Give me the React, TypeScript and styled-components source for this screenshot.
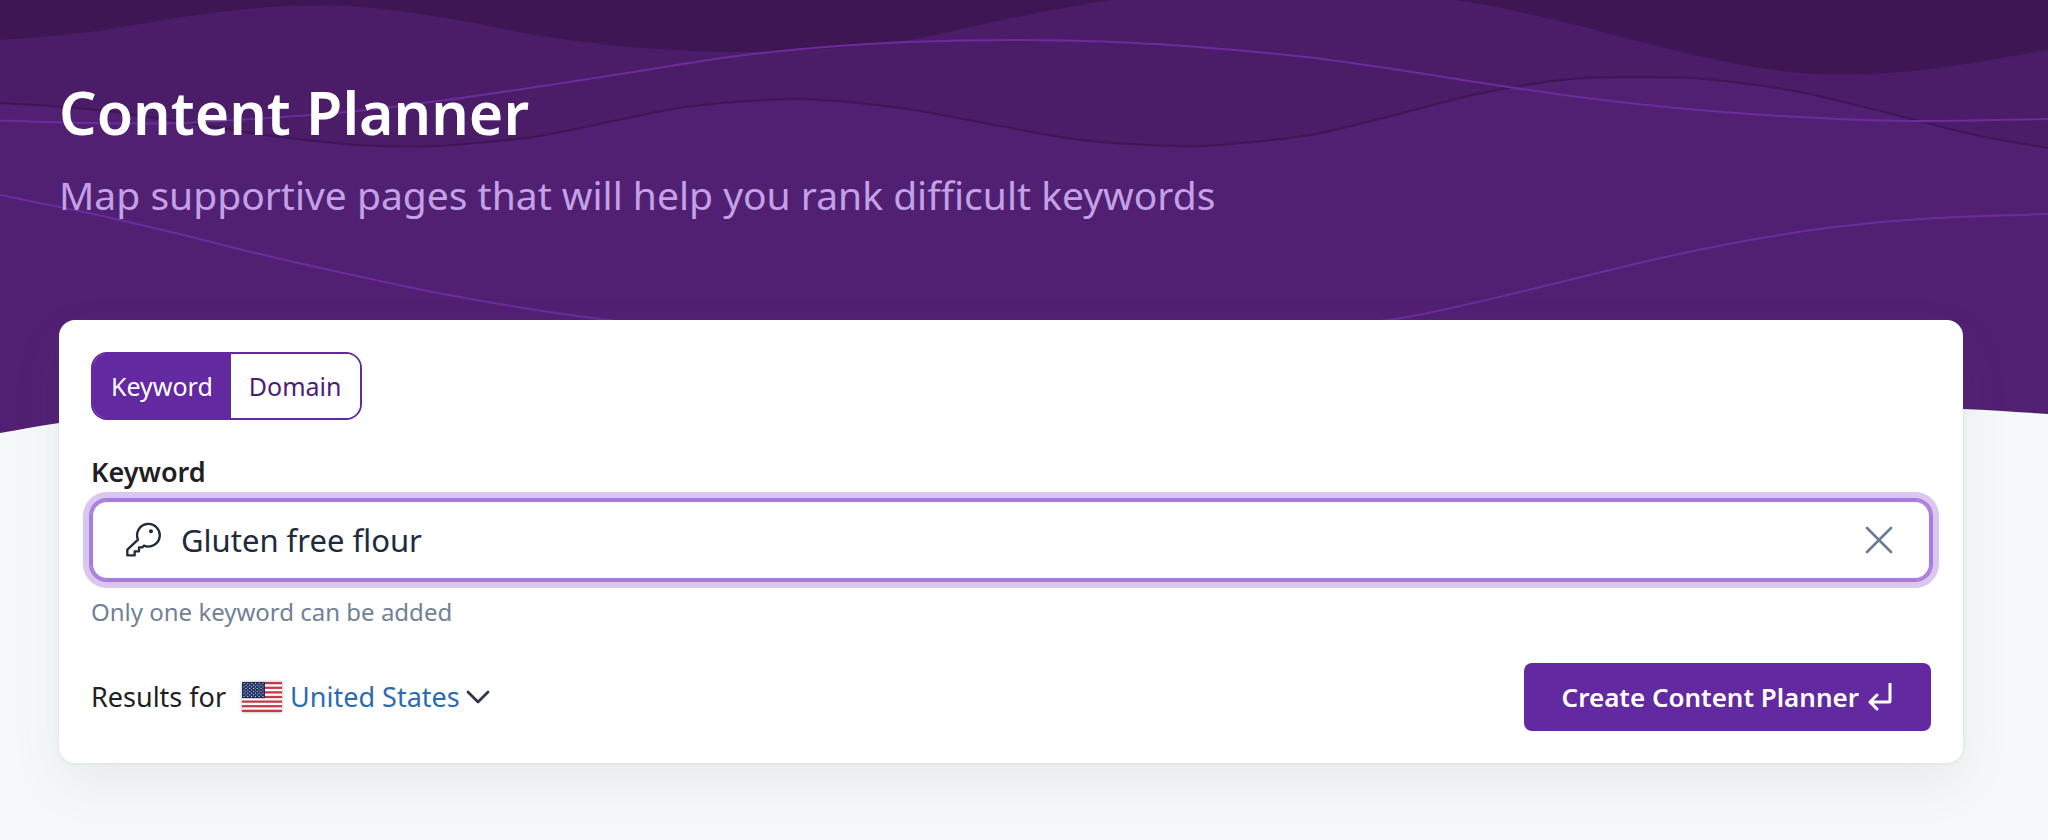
import React, { useState } from 'react';
import styled, { createGlobalStyle } from 'styled-components';

const GlobalStyle = createGlobalStyle`
  *, *::before, *::after { box-sizing: border-box; }
  body {
    margin: 0;
    background: #f5f9fa;
    color: #1f2023;
    font-family: "Noto Sans", sans-serif;
  }
  button, input, select { font: inherit; color: inherit; margin: 0; }
`;

const Page = styled.div`
  position: relative;
  min-height: 100vh;
  overflow: hidden;
`;

const Waves = styled.svg`
  position: absolute;
  top: 0;
  left: 0;
  width: 100%;
  height: 440px;
`;

const Content = styled.main`
  position: relative;
  padding: 76px 85px 76px 59px;
`;

const Title = styled.h1`
  margin: 0;
  font-size: 59px;
  font-weight: 600;
  line-height: 72px;
  color: #fff;
`;

const Subtitle = styled.p`
  margin: 20px 0 0;
  font-size: 39px;
  line-height: 54px;
  color: #c3a1e6;
`;

const Card = styled.form`
  display: flex;
  flex-direction: column;
  align-items: stretch;
  margin-top: 98px;
  padding: 32px;
  border-radius: 16px;
  background: #fff;
  box-shadow: 0 20px 50px rgba(75, 85, 85, 0.09), 0 0 4px rgba(75, 85, 85, 0.12);
`;

const Toggle = styled.div`
  display: flex;
  align-self: flex-start;
  height: 68px;
  overflow: hidden;
  border: 2px solid #6229a0;
  border-radius: 16px;
`;

const ToggleOption = styled.button<{ $active: boolean }>`
  padding: 0 18px;
  border: 0;
  font-size: 25px;
  background: ${(p) => (p.$active ? '#6229a0' : '#fff')};
  box-shadow: ${(p) => (p.$active ? '0 0 0 2px #6229a0' : 'none')};
  color: ${(p) => (p.$active ? '#fff' : '#4a1d7a')};
`;

const Label = styled.label`
  margin-top: 34px;
  font-size: 27px;
  font-weight: 600;
  line-height: 36px;
`;

const Field = styled.div`
  display: flex;
  align-items: center;
  gap: 20px;
  height: 80px;
  margin-top: 10px;
  padding: 0 32px;
  border: 2px solid #a87cdc;
  border-radius: 16px;
  box-shadow: 0 0 0 2px #a87cdc, 0 0 0 8px #dac6ee;
  color: #212a3b;
`;

const TextInput = styled.input`
  flex: 1;
  min-width: 0;
  padding: 0;
  border: 0;
  outline: 0;
  background: transparent;
  font-size: 31px;
  line-height: 44px;
`;

const ClearButton = styled.button`
  display: flex;
  padding: 4px;
  border: 0;
  background: transparent;
  color: #6b7d94;
`;

const Hint = styled.p`
  margin: 16px 0 0;
  font-size: 24px;
  line-height: 32px;
  color: #718196;
`;

const Footer = styled.div`
  display: flex;
  align-items: center;
  justify-content: space-between;
  margin-top: 35px;
`;

const Location = styled.div`
  display: flex;
  align-items: center;
  gap: 8px;
  font-size: 27px;
  line-height: 36px;
`;

const LocationLabel = styled.label`
  margin-right: 8px;
`;

const FlagFrame = styled.svg`
  display: block;
  box-shadow: 0 0 3px rgba(0, 0, 0, 0.35);
`;

const SelectWrap = styled.div`
  display: flex;
  align-items: center;
  gap: 5px;
  color: #2d3748;
`;

const CountrySelect = styled.select`
  appearance: none;
  padding: 0;
  border: 0;
  outline: 0;
  background: transparent;
  color: #2b6cb0;
`;

const SubmitButton = styled.button`
  display: flex;
  align-items: center;
  gap: 6px;
  height: 68px;
  padding: 0 38px;
  border: 0;
  border-radius: 8px;
  background: #6229a0;
  color: #fff;
  font-size: 26px;
  font-weight: 600;
`;

type Point = [number, number];

// Slope of the curve at a point, taken from its two neighbours.
function slopeAt(points: Point[], i: number): number {
  const a = points[Math.max(i - 1, 0)];
  const b = points[Math.min(i + 1, points.length - 1)];
  return (b[1] - a[1]) / (b[0] - a[0]);
}

// A smooth line through the points, as cubic segments.
function curve(points: Point[]): string {
  return points
    .map(([x, y], i) => {
      if (i === 0) return `M${x} ${y}`;
      const [px, py] = points[i - 1];
      const third = (x - px) / 3;
      const y1 = py + slopeAt(points, i - 1) * third;
      const y2 = y - slopeAt(points, i) * third;
      return `C${px + third} ${y1} ${x - third} ${y2} ${x} ${y}`;
    })
    .join('');
}

const darkEdge: Point[] = [
  [0, 40], [89, 32], [179, 17.5], [268, 7], [312, 5.7], [357, 6.5], [446, 18], [536, 35],
  [625, 46.5], [729, 52], [819, 49], [908, 40], [997, 21], [1113, 0], [1280, -14], [1455, 0],
  [1549, 18.5], [1638, 41], [1727, 62], [1790, 72], [1848, 74.5], [1928, 69.5], [2048, 50],
];

const midEdge: Point[] = [
  [0, 103], [89, 109], [179, 121.5], [268, 135.5], [357, 145], [402, 146.5], [446, 145.5],
  [536, 136.5], [625, 118.5], [685, 107], [774, 99.5], [819, 99.7], [908, 109], [997, 125.5],
  [1086, 140.5], [1176, 146], [1220, 145], [1310, 135], [1393, 115.5], [1482, 93], [1571, 79],
  [1638, 77], [1705, 79], [1794, 91], [1884, 112], [1973, 134.5], [2048, 148],
];

const upperLine: Point[] = [
  [0, 120.5], [89, 123], [179, 123], [268, 118], [357, 111], [446, 100], [536, 87], [640, 71],
  [729, 57], [819, 47.5], [908, 42], [1020, 40], [1131, 42.7], [1220, 48.7], [1310, 57.5],
  [1393, 69], [1482, 83], [1571, 96], [1661, 106.5], [1750, 114], [1839, 119], [1928, 121],
  [2048, 119],
];

const lowerLine: Point[] = [
  [0, 195], [89, 213], [179, 234], [268, 256], [357, 276], [446, 294.5], [536, 310], [625, 322],
  [780, 336], [1000, 344], [1210, 338], [1388, 320], [1482, 301], [1571, 279.5], [1661, 258],
  [1750, 240], [1839, 226.5], [1928, 218.5], [2048, 214],
];

const heroEdge: Point[] = [
  [0, 433], [59, 423], [300, 390], [700, 370], [1200, 385], [1600, 402], [1963, 409], [2048, 414],
];

function HeroWaves() {
  return (
    <Waves viewBox="0 0 2048 440" preserveAspectRatio="none" aria-hidden="true">
      <path d={`${curve(heroEdge)}V0H0Z`} fill="#522073" />
      <path d={`${curve(midEdge)}V0H0Z`} fill="#4b1c67" />
      <path d={`${curve(darkEdge)}V0H0Z`} fill="#3f1654" />
      <path d={curve(midEdge)} fill="none" stroke="#3f1654" strokeWidth="2" />
      <path d={curve(upperLine)} fill="none" stroke="#6b2d9c" strokeWidth="2" />
      <path d={curve(lowerLine)} fill="none" stroke="#6b2d9c" strokeWidth="2" />
    </Waves>
  );
}

function KeyIcon() {
  return (
    <svg width="36" height="36" viewBox="0 0 108 108" fill="none" aria-hidden="true">
      <path
        d="M39 53A34 34 0 1 1 57 71L52 76H42V88H29V100H7V83Z"
        stroke="currentColor"
        strokeWidth="7"
        strokeLinejoin="round"
      />
      <circle cx="78" cy="28" r="6" fill="currentColor" />
    </svg>
  );
}

function ClearIcon() {
  return (
    <svg width="28" height="28" viewBox="0 0 28 28" fill="none" aria-hidden="true">
      <path d="M2 2L26 26M26 2L2 26" stroke="currentColor" strokeWidth="2.6" strokeLinecap="round" />
    </svg>
  );
}

function ChevronIcon() {
  return (
    <svg width="26" height="16" viewBox="0 0 26 16" fill="none" aria-hidden="true">
      <path
        d="M3 3L13 13L23 3"
        stroke="currentColor"
        strokeWidth="2.8"
        strokeLinecap="round"
        strokeLinejoin="round"
      />
    </svg>
  );
}

function ReturnIcon() {
  return (
    <svg width="28" height="28" viewBox="0 0 28 28" fill="none" aria-hidden="true">
      <path
        d="M25 1V18Q25 19 24 19H5M12 12L5 19L12 26"
        stroke="currentColor"
        strokeWidth="3"
        strokeLinecap="round"
        strokeLinejoin="round"
      />
    </svg>
  );
}

function UsFlag() {
  const stripe = 30 / 13;
  const stars = [];
  for (let row = 0; row < 9; row += 1) {
    const count = row % 2 === 0 ? 6 : 5;
    for (let i = 0; i < count; i += 1) {
      stars.push(
        <circle key={`${row}-${i}`} cx={2 + (row % 2) * 1.9 + i * 3.8} cy={1.6 + row * 1.6} r="0.6" fill="#dfe4ee" />,
      );
    }
  }
  return (
    <FlagFrame width="40" height="30" viewBox="0 0 40 30" aria-hidden="true">
      <rect width="40" height="30" fill="#fff" />
      {[0, 2, 4, 6, 8, 10, 12].map((n) => (
        <rect key={n} y={n * stripe} width="40" height={stripe} fill="#c43a49" />
      ))}
      <rect width="23" height={stripe * 7} fill="#1f2f61" />
      {stars}
    </FlagFrame>
  );
}

export default function App() {
  const [mode, setMode] = useState('Keyword');
  const [keyword, setKeyword] = useState('Gluten free flour');

  return (
    <Page>
      <GlobalStyle />
      <HeroWaves />
      <Content>
        <Title>Content Planner</Title>
        <Subtitle>Map supportive pages that will help you rank difficult keywords</Subtitle>
        <Card onSubmit={(e) => e.preventDefault()}>
          <Toggle role="group" aria-label="Search type">
            {['Keyword', 'Domain'].map((name) => (
              <ToggleOption
                key={name}
                type="button"
                $active={mode === name}
                aria-pressed={mode === name}
                onClick={() => setMode(name)}
              >
                {name}
              </ToggleOption>
            ))}
          </Toggle>
          <Label htmlFor="keyword">Keyword</Label>
          <Field>
            <KeyIcon />
            <TextInput id="keyword" value={keyword} onChange={(e) => setKeyword(e.target.value)} />
            <ClearButton type="button" aria-label="Clear" onClick={() => setKeyword('')}>
              <ClearIcon />
            </ClearButton>
          </Field>
          <Hint>Only one keyword can be added</Hint>
          <Footer>
            <Location>
              <LocationLabel htmlFor="country">Results for</LocationLabel>
              <UsFlag />
              <SelectWrap>
                <CountrySelect id="country" defaultValue="us">
                  <option value="us">United States</option>
                </CountrySelect>
                <ChevronIcon />
              </SelectWrap>
            </Location>
            <SubmitButton type="submit">
              Create Content Planner
              <ReturnIcon />
            </SubmitButton>
          </Footer>
        </Card>
      </Content>
    </Page>
  );
}
